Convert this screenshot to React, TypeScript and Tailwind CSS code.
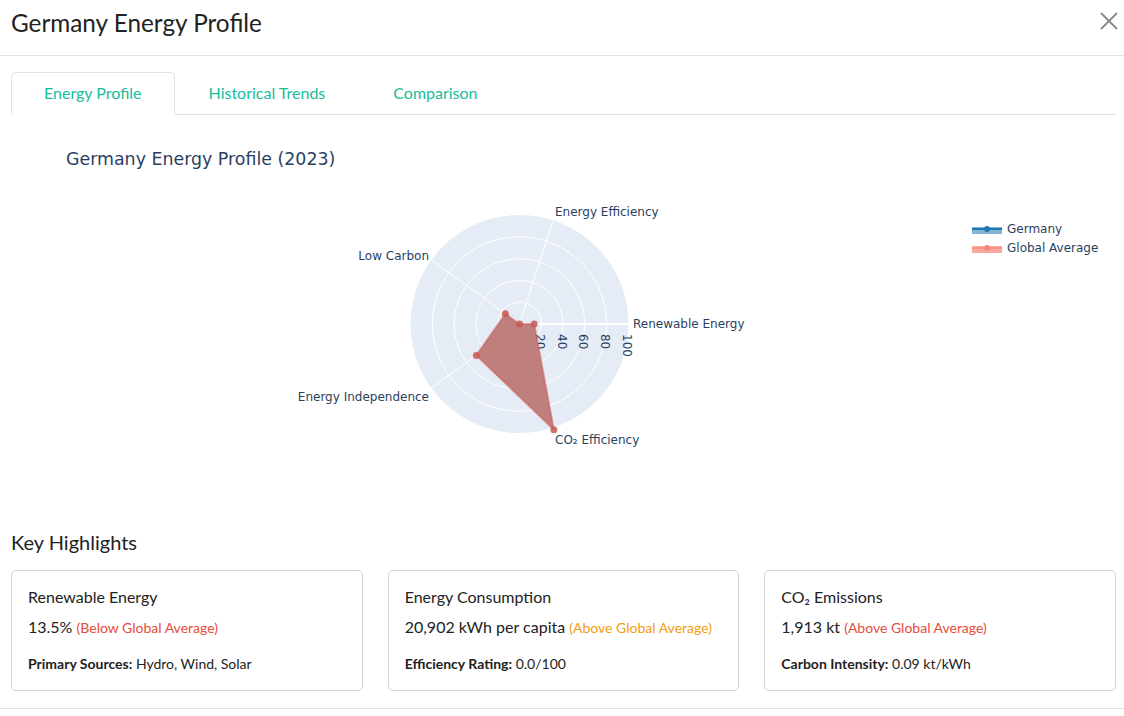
const CX = 519.5;
const CY = 323;
const R = 109;

function pt(angleDeg: number, r: number): [number, number] {
  const a = (angleDeg * Math.PI) / 180;
  return [CX + r * Math.cos(a), CY - r * Math.sin(a)];
}

// values read off the radar (0-100 scale)
const axes = [
  { name: 'Renewable Energy', angle: 0, value: 13.5 },
  { name: 'Energy Efficiency', angle: 72, value: 0 },
  { name: 'Low Carbon', angle: 144, value: 16 },
  { name: 'Energy Independence', angle: 216, value: 49 },
  { name: 'CO₂ Efficiency', angle: 288, value: 102 },
];

function RadarChart() {
  const points = axes.map(a => pt(a.angle, (a.value / 100) * R));
  const poly = points.map(p => p.join(',')).join(' ');
  const font = '"DejaVu Sans", Verdana, sans-serif';

  return (
    <svg viewBox="11 114 1105 405" className="block w-[1105px] h-[405px]" style={{ fontFamily: font }}>
      <text x={66} y={164} fontSize={17.4} fill="#2a3f5f">Germany Energy Profile (2023)</text>

      {/* polar background */}
      <circle cx={CX} cy={CY} r={R} fill="#e5ecf6" />
      {[20, 40, 60, 80].map(v => (
        <circle key={v} cx={CX} cy={CY} r={(v / 100) * R} fill="none" stroke="#fff" strokeWidth={1} />
      ))}
      {[72, 144, 216, 288].map(a => {
        const [x, y] = pt(a, R);
        return <line key={a} x1={CX} y1={CY} x2={x} y2={y} stroke="#fff" strokeWidth={1} />;
      })}
      <line x1={CX} y1={CY} x2={CX + R + 4} y2={CY} stroke="#fff" strokeWidth={2} />

      {/* radial ticks */}
      {[0, 20, 40, 60, 80, 100].map(v => {
        const x = CX + (v / 100) * R - 1.5;
        return (
          <text key={v} x={x} y={333} fontSize={12} fill="#2a3f5f" dominantBaseline="central" transform={`rotate(90 ${x} 333)`}>
            {v}
          </text>
        );
      })}

      {/* angular labels */}
      <text x={633} y={327} fontSize={12} fill="#2a3f5f">Renewable Energy</text>
      <text x={555} y={215} fontSize={12} fill="#2a3f5f">Energy Efficiency</text>
      <text x={429} y={259} fontSize={12} fill="#2a3f5f" textAnchor="end">Low Carbon</text>
      <text x={429} y={400} fontSize={12} fill="#2a3f5f" textAnchor="end">Energy Independence</text>
      <text x={555} y={443} fontSize={12} fill="#2a3f5f">CO₂ Efficiency</text>

      {/* trace */}
      <polygon points={poly} fill="#bf7f7d" stroke="rgba(205,95,90,0.55)" strokeWidth={2} strokeLinejoin="round" />
      {points.map((p, i) => (
        <circle key={i} cx={p[0]} cy={p[1]} r={3.5} fill="rgba(200,88,82,0.85)" />
      ))}

      {/* legend */}
      <g>
        <rect x={972} y={226} width={30} height={7} fill="#1f77b4" opacity={0.55} />
        <line x1={972} y1={228} x2={1002} y2={228} stroke="#1f77b4" strokeWidth={2} />
        <circle cx={987} cy={228} r={3} fill="#1f77b4" />
        <text x={1007} y={232} fontSize={12} fill="#2a3f5f">Germany</text>

        <rect x={972} y={245} width={30} height={7} fill="#f8a095" opacity={0.9} />
        <line x1={972} y1={247} x2={1002} y2={247} stroke="#f89585" strokeWidth={2} />
        <circle cx={987} cy={247} r={3} fill="#f58a7c" />
        <text x={1007} y={251} fontSize={12} fill="#2a3f5f">Global Average</text>
      </g>
    </svg>
  );
}

function HighlightCard({ title, value, note, noteColor, label, detail }: {
  title: string;
  value: string;
  note: string;
  noteColor: string;
  label: string;
  detail: string;
}) {
  return (
    <div className="border border-[#d4d4d4] rounded-[5px] px-4 pt-4 pb-4">
      <div className="text-base leading-5 text-[#222]">{title}</div>
      <div className="mt-2 text-base leading-6 text-[#222]">
        {value} <span className={`text-sm ${noteColor}`}>{note}</span>
      </div>
      <div className="mt-[15px] text-sm leading-5 text-[#222]">
        <span className="font-bold">{label}</span> {detail}
      </div>
    </div>
  );
}

export default function App() {
  return (
    <div className="w-[1124px] h-[716px] bg-white overflow-hidden" style={{ fontFamily: 'Lato, "Open Sans", sans-serif' }}>
      {/* header */}
      <div className="h-[56px] border-b border-[#dee2e6] flex items-start justify-between pl-[11px] pr-[6px] pt-[8px]">
        <h2 className="text-[24.3px] leading-[29px] text-[#222]">Germany Energy Profile</h2>
        <button className="mt-[4px] text-[#8a8a8a]">
          <svg width="18" height="18" viewBox="0 0 18 18" fill="none" stroke="currentColor" strokeWidth="1.8" strokeLinecap="round">
            <line x1="1.5" y1="1.5" x2="16.5" y2="16.5" />
            <line x1="16.5" y1="1.5" x2="1.5" y2="16.5" />
          </svg>
        </button>
      </div>

      <div className="pl-[11px] pr-[8px] pt-4">
        {/* tabs */}
        <div className="flex border-b border-[#dee2e6]">
          <div className="px-[32px] py-2 text-base leading-6 text-[#18bc9c] bg-white border border-[#dee2e6] border-b-white rounded-t-[5px] -mb-px">
            Energy Profile
          </div>
          <div className="px-[33px] py-2 text-base leading-6 text-[#18bc9c] border border-transparent">Historical Trends</div>
          <div className="px-[33px] py-2 text-base leading-6 text-[#18bc9c] border border-transparent">Comparison</div>
        </div>

        <RadarChart />

        <h4 className="mt-[10px] text-xl leading-6 text-[#222]">Key Highlights</h4>

        <div className="mt-4 grid grid-cols-3 gap-[25px]">
          <HighlightCard
            title="Renewable Energy"
            value="13.5%"
            note="(Below Global Average)"
            noteColor="text-[#e74c3c]"
            label="Primary Sources:"
            detail="Hydro, Wind, Solar"
          />
          <HighlightCard
            title="Energy Consumption"
            value="20,902 kWh per capita"
            note="(Above Global Average)"
            noteColor="text-[#f39c12]"
            label="Efficiency Rating:"
            detail="0.0/100"
          />
          <HighlightCard
            title="CO₂ Emissions"
            value="1,913 kt"
            note="(Above Global Average)"
            noteColor="text-[#e74c3c]"
            label="Carbon Intensity:"
            detail="0.09 kt/kWh"
          />
        </div>
      </div>

      <div className="mt-[17px] border-t border-[#dee2e6]" />
    </div>
  );
}
